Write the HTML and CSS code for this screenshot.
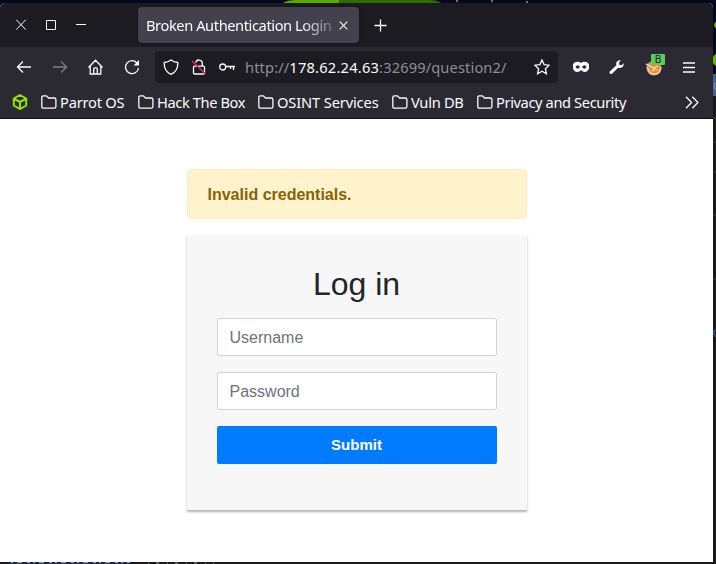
FILE: index.html
```
<!DOCTYPE html>
<html lang="en">
<head>
<meta charset="utf-8">
<title>Broken Authentication Login</title>
<link rel="stylesheet" href="styles.css">
</head>
<body>
<svg class="desktop" width="716" height="564" viewBox="0 0 716 564" aria-hidden="true">
  <rect width="716" height="564" fill="#191919"/>
  <rect width="716" height="75" fill="#04081f"/>
  <path d="M283 3q5-3 13-3h43v3z" fill="#56ad00"/><path d="M339 0h91q7 0 11 3H339z" fill="#306a00"/>
  <path d="M491 1h2M526 2h2M456 1h2" stroke="#7da77d"/>
  <circle cx="717" cy="25" r="3" fill="#61b800"/><circle cx="718" cy="60" r="6" fill="#61b800"/>
  <rect x="712" y="74" width="4" height="22" fill="#426593"/>
  <circle cx="717" cy="86" r="3" fill="none" stroke="#89809b"/>
  <path d="M713 118h3M713 142h3M713 172h3M713 215h3M713 279h3" stroke="#303030"/>
  <circle cx="718" cy="333" r="4" fill="none" stroke="#386280"/>
  <path d="M8 563h120" stroke="#202050" stroke-width="2"/>
  <path d="M11 562.5h119" stroke="#8494aa" stroke-dasharray="2 4 5 5 3 3"/>
  <path d="M148 563h66" stroke="#777" stroke-dasharray="1 7 3 8"/>
</svg>
<div class="window">
  <header class="tabs">
    <svg class="controls" width="72" height="12" viewBox="0 0 72 12"><path d="M.2.7l9.600 10M9.800.7L.2 10.700M30.500 1.500h9v9h-9zM60 5.500h10"/></svg>
    <div class="tab"><span class="tab-title">Broken Authentication Login</span><svg width="9" height="9" viewBox="0 0 9 9"><path d="M.7.7l7.600 7.600M8.300.7L.7 8.300"/></svg></div>
    <svg class="new-tab" width="13" height="13" viewBox="0 0 13 13"><path d="M6.500.5v12M.5 6.500h12"/></svg>
  </header>
  <nav class="toolbar">
    <svg class="tool" viewBox="0 0 16 16"><path d="M15 8H1.500M7 2.500L1.500 8 7 13.500"/></svg>
    <svg class="tool dim" viewBox="0 0 16 16"><path d="M1 8h13.500M9 2.500L14.500 8 9 13.500"/></svg>
    <svg class="tool" viewBox="0 0 16 16"><path d="M.5 8.500l7-7.300 7 7.300M2.200 7v8h10.600V7M5.700 15V9.800q0-1 1-1h1.600q1 0 1 1V15"/></svg>
    <svg class="tool" viewBox="0 0 16 16"><path d="M13.300 4.300A6.500 6.500 0 1 0 14.500 9"/><path class="solid" d="M15 1v5.500H9.500z"/></svg>
    <div class="address">
      <svg class="tool" viewBox="0 0 16 16"><path d="M8 .9c2 1.600 4.500 2.400 6.800 2.600C15 9.300 12.300 13.500 8 15.300 3.700 13.500 1 9.300 1.200 3.500 3.500 3.300 6 2.500 8 .9z"/></svg>
      <svg class="tool" viewBox="0 0 16 16"><path d="M4.800 3.500a3.300 3.300 0 0 1 6.500.8V7M3.500 7.200h9q1 0 1 1V14q0 1-1 1h-9q-1 0-1-1V8.200q0-1 1-1z"/><path class="slash" d="M1 2l13.500 13"/></svg>
      <svg class="tool" viewBox="0 0 16 16"><circle cx="3.700" cy="8" r="3"/><path d="M6.700 7.500H16M11.500 7.500V10M14.500 7.500V11"/></svg>
      <span class="url">http://<b>178.62.24.63</b>:32699/question2/</span>
      <svg class="tool star" viewBox="0 0 16 16"><path d="M8 .9l2.100 4.700 5.100.6-3.800 3.500 1 5L8 12.200l-4.400 2.500 1-5L.8 6.200l5.100-.6z"/></svg>
    </div>
    <svg class="mask" viewBox="0 0 18 16"><path class="solid" fill-rule="evenodd" d="M1 5.500C2.500 2.200 7 2.300 9 4c2-1.700 6.500-1.800 8 1.500v3.700c-1 4.500-5.700 4.800-8 1.800-2.300 3-7 2.700-8-1.800zM3.500 8q2 3.500 4.500 0-2.500-3.500-4.500 0zM10 8q2.500 3.500 4.500 0-2-3.500-4.500 0z"/></svg>
    <svg class="tool wrench" viewBox="0 0 16 16"><path class="solid" d="M14.800 4.300c.3 3.800-3 5.500-5.700 4.500L3.300 14.600C1.600 16-.5 14 1 12.200l6.400-5.900C6.400 3.300 8.300.8 12 1.200L10 3.500l.3 2.200 2.300.5z"/></svg>
    <div class="fox"><svg width="18" height="18" viewBox="0 0 18 18"><circle cx="9" cy="10" r="7.500" fill="#c99167"/><path d="M3 6l4 1 4-2 5 2-1 8-5 2-6-2z" fill="#f08a2e"/><path d="M1 6l4 2M2 9l3 6q5 3 9-1l2-5" fill="none" stroke="#ddd5cc" stroke-width="1.500"/><path d="M5 8l3 2 5-2M7 13l3-2 2 1" stroke="#ffe1b5" fill="none"/></svg><span>B</span></div>
    <svg class="menu" width="12" height="11" viewBox="0 0 12 11"><path d="M0 1h12M0 5.500h12M0 10h12"/></svg>
  </nav>
  <nav class="bookmarks">
    <svg class="cube" width="16" height="16" viewBox="0 0 16 16"><path d="M8 1l6.200 3.500v7L8 15l-6.200-3.500v-7zM2 4.700L8 8l6-3.300M8 8v6.500"/></svg>
    <a class="b1"><svg viewBox="0 0 16 14"><path d="M.8 11.500v-9Q.8.900 2.400.9h3L7.600 3h5.700q1.600 0 1.600 1.600v6.900q0 1.600-1.600 1.600H2.400Q.8 13.100.8 11.500z"/></svg><span>Parrot OS</span></a>
    <a class="b2"><svg viewBox="0 0 16 14"><path d="M.8 11.500v-9Q.8.900 2.400.9h3L7.600 3h5.700q1.600 0 1.600 1.600v6.900q0 1.600-1.600 1.600H2.400Q.8 13.100.8 11.500z"/></svg><span>Hack The Box</span></a>
    <a class="b3"><svg viewBox="0 0 16 14"><path d="M.8 11.500v-9Q.8.900 2.400.9h3L7.600 3h5.700q1.600 0 1.600 1.600v6.900q0 1.600-1.600 1.600H2.400Q.8 13.100.8 11.500z"/></svg><span>OSINT Services</span></a>
    <a class="b4"><svg viewBox="0 0 16 14"><path d="M.8 11.500v-9Q.8.900 2.400.9h3L7.600 3h5.700q1.600 0 1.600 1.600v6.900q0 1.600-1.600 1.600H2.400Q.8 13.100.8 11.500z"/></svg><span>Vuln DB</span></a>
    <a class="b5"><svg viewBox="0 0 16 14"><path d="M.8 11.500v-9Q.8.900 2.400.9h3L7.600 3h5.700q1.600 0 1.600 1.600v6.900q0 1.600-1.600 1.600H2.400Q.8 13.100.8 11.500z"/></svg><span>Privacy and Security</span></a>
    <svg class="more" width="14" height="13" viewBox="0 0 14 13"><path d="M1 .7l5.600 5.800L1 12.300M7.300.7l5.600 5.800-5.600 5.800"/></svg>
  </nav>
  <main>
    <div class="alert">Invalid credentials.</div>
    <form class="login">
      <h1>Log in</h1>
      <input type="text" placeholder="Username">
      <input type="password" placeholder="Password">
      <button type="button">Submit</button>
    </form>
  </main>
</div>
</body>
</html>
```
FILE: styles.css
```
* { box-sizing: border-box; }
body { margin: 0; padding-top: 3px; width: 716px; height: 564px; overflow: hidden; background: #191919; font-family: "Noto Sans", sans-serif; font-size: 14.67px; color: #fbfbfe; }
.desktop { position: absolute; left: 0; top: 0; z-index: -1; }
svg { display: block; flex: none; fill: none; stroke: #fbfbfe; stroke-width: 1.300; }
.desktop { stroke: none; }
.window { width: 713px; height: 559px; background: #fff; border-radius: 5px 5px 0 0; overflow: hidden; }
.tabs { display: flex; height: 44px; padding-top: 4px; background: #1c1b22; }
.controls { margin: 12px 50px 0 16px; stroke-width: 1; }
.tab { display: flex; align-items: center; width: 221px; height: 36px; padding: 0 11px 0 8px; justify-content: space-between; background: #42414d; border-radius: 4px; box-shadow: 0 0 3px #0006; }
.tab-title { width: 190px; white-space: nowrap; letter-spacing: -.42px; mask-image: linear-gradient(to right, #000 155px, #0003 188px); }
.tab svg { stroke-width: 1.100; }
.new-tab { margin: 12px 0 0 15px; }
.toolbar { display: flex; align-items: center; height: 40px; padding-left: 16px; background: #2b2a33; }
.tool { width: 16px; height: 16px; margin-right: 20px; }
.dim { opacity: .4; }
.solid { fill: #fbfbfe; stroke: none; }
.address { display: flex; align-items: center; width: 403px; height: 32px; margin-left: -5px; padding-left: 8px; background: #1c1b22; border-radius: 4px; }
.address .tool { margin-right: 12px; }
.address .slash { stroke: #e22850; stroke-width: 1.500; }
.url { width: 280px; margin-left: -2px; color: #8f8e96; white-space: nowrap; letter-spacing: .12px; }
.url b { font-weight: 400; color: #fbfbfe; letter-spacing: .21px; }
.address .star { margin: 0 0 0 9px; }
.mask { width: 18px; height: 16px; margin: 0 19px 0 14px; }
.wrench { margin-right: 20px; }
.fox { position: relative; width: 18px; height: 18px; }
.fox svg { stroke: none; }
.fox span { position: absolute; left: 6px; top: -4px; width: 14px; height: 11px; background: #5acb60; border-radius: 1px; color: #102713; font-size: 10px; line-height: 11px; text-align: center; }
.menu { margin-left: 20px; }
.bookmarks { display: flex; align-items: center; height: 32px; padding: 0 14px 1px 12px; background: #2b2a33; border-bottom: 1px solid #0c0c0d; }
.cube { stroke: #94e400; stroke-width: 2; margin-right: 13px; }
.bookmarks a { display: flex; align-items: center; gap: 3px; white-space: nowrap; }
.bookmarks a svg { width: 16px; height: 14px; }
.b1 { width: 97px; letter-spacing: -.22px; }
.b2 { width: 120px; letter-spacing: -.4px; }
.b3 { width: 134px; letter-spacing: -.14px; }
.b4 { width: 85px; letter-spacing: -.28px; }
.b5 { letter-spacing: -.39px; }
.more { margin-left: auto; }
main { display: flex; flex-direction: column; align-items: center; padding-top: 50px; font-family: "Liberation Sans", sans-serif; }
.alert { width: 340px; height: 50px; padding: 0 20px; border: 1px solid #ffeeba; border-radius: 4px; background: #fff3cd; color: #856404; font-size: 16px; font-weight: 700; line-height: 49px; }
.login { display: flex; flex-direction: column; width: 340px; height: 275px; margin-top: 16px; padding: 30px; background: #f7f7f7; box-shadow: 0 2px 2px rgba(0,0,0,.3); }
.login h1 { margin: 0 0 15px; color: #212529; font-size: 32px; font-weight: 400; line-height: 38px; text-align: center; }
.login input { width: 100%; height: 38px; margin: 0 0 16px; padding: 7px 12px 5px; border: 1px solid #ced4da; border-radius: 2px; background: #fff; font: 16px "Liberation Sans", sans-serif; }
.login input::placeholder { color: #6c757d; opacity: 1; }
.login button { height: 38px; padding: 0 0 2px; border: 0; border-radius: 2px; background: #007bff; color: #fff; font: 700 15px "Liberation Sans", sans-serif; }
```
